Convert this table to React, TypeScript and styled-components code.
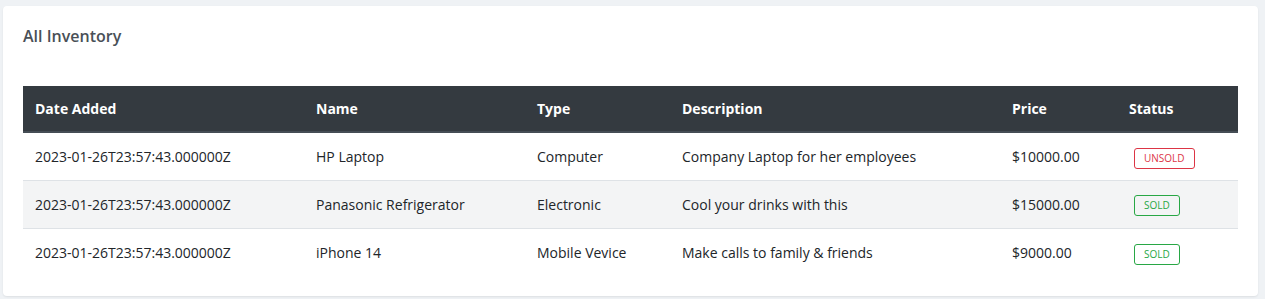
import React from 'react';
import styled, { createGlobalStyle } from 'styled-components';

const GlobalStyle = createGlobalStyle`
    body {
        margin: 0;
        background: #eff2f5;
        font-family: "Open Sans", "Liberation Sans", sans-serif;
    }
`;

const Page = styled.div`
    padding: 6px 7px 3px 3px;
`;

const Card = styled.div`
    background: #fff;
    border-radius: 4px;
    box-shadow: 0 1px 2px rgba(0, 0, 0, 0.08);
    padding: 19px 20px 20px;
`;

const Title = styled.h4`
    margin: 0 0 39px;
    font-size: 16px;
    font-weight: 600;
    line-height: 22px;
    color: #495057;
`;

const Table = styled.table`
    width: 100%;
    table-layout: fixed;
    border-collapse: collapse;
    font-size: 14px;
    color: #212529;
`;

const HeadCell = styled.th<{ w: number }>`
    box-sizing: border-box;
    width: ${(p) => p.w}px;
    background: #343a40;
    color: #fff;
    text-align: left;
    font-weight: 700;
    padding: 12px;
    line-height: 21px;
    border-bottom: 2px solid #454d55;
`;

const Row = styled.tr<{ striped?: boolean }>`
    background: ${(p) => (p.striped ? '#f3f4f5' : '#fff')};
    &:not(:last-child) td {
        border-bottom: 1px solid #dee2e6;
    }
`;

const Cell = styled.td`
    height: 48px;
    box-sizing: border-box;
    padding: 2px 12px 0;
    line-height: 22px;
    vertical-align: middle;
    white-space: nowrap;
`;

const Badge = styled.span<{ sold: boolean }>`
    display: inline-block;
    vertical-align: middle;
    font-size: 10px;
    line-height: 19px;
    padding: 0 9px;
    margin-left: 5px;
    border-radius: 3px;
    border: 1px solid ${(p) => (p.sold ? '#28a745' : '#dc3545')};
    color: ${(p) => (p.sold ? '#28a745' : '#dc3545')};
`;

const columns = [
    { label: 'Date Added', w: 281 },
    { label: 'Name', w: 221 },
    { label: 'Type', w: 145 },
    { label: 'Description', w: 330 },
    { label: 'Price', w: 117 },
    { label: 'Status', w: 121 },
];

const items = [
    { date: '2023-01-26T23:57:43.000000Z', name: 'HP Laptop', type: 'Computer', desc: 'Company Laptop for her employees', price: '$10000.00', sold: false },
    { date: '2023-01-26T23:57:43.000000Z', name: 'Panasonic Refrigerator', type: 'Electronic', desc: 'Cool your drinks with this', price: '$15000.00', sold: true },
    { date: '2023-01-26T23:57:43.000000Z', name: 'iPhone 14', type: 'Mobile Vevice', desc: 'Make calls to family & friends', price: '$9000.00', sold: true },
];

function App() {
    return (
        <Page>
            <GlobalStyle />
            <Card>
                <Title>All Inventory</Title>
                <Table>
                    <thead>
                        <tr>
                            {columns.map((c) => (
                                <HeadCell key={c.label} w={c.w}>{c.label}</HeadCell>
                            ))}
                        </tr>
                    </thead>
                    <tbody>
                        {items.map((item, i) => (
                            <Row key={i} striped={i % 2 === 1}>
                                <Cell>{item.date}</Cell>
                                <Cell>{item.name}</Cell>
                                <Cell>{item.type}</Cell>
                                <Cell>{item.desc}</Cell>
                                <Cell>{item.price}</Cell>
                                <Cell>
                                    <Badge sold={item.sold}>{item.sold ? 'SOLD' : 'UNSOLD'}</Badge>
                                </Cell>
                            </Row>
                        ))}
                    </tbody>
                </Table>
            </Card>
        </Page>
    );
}

export default App;
